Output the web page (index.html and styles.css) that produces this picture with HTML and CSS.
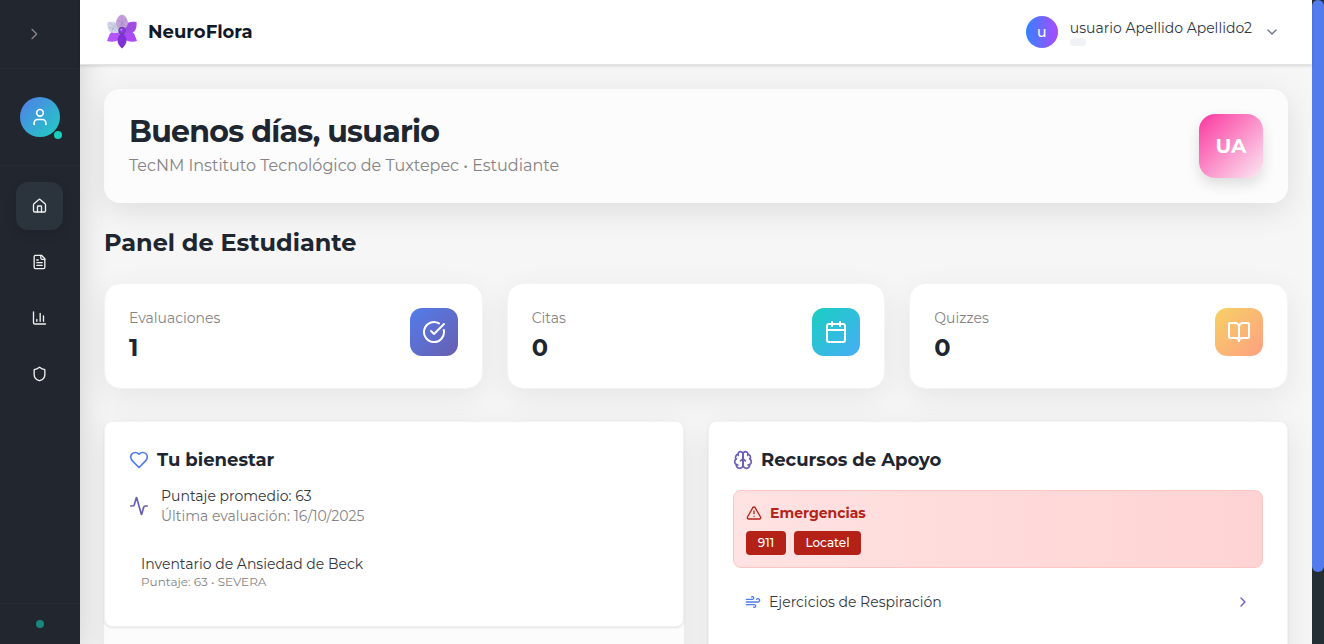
FILE: index.html
```html
<!DOCTYPE html>
<html lang="es">
<head>
<meta charset="utf-8">
<title>NeuroFlora</title>
<link rel="stylesheet" href="styles.css">
</head>
<body>
<div class="app">
  <aside class="sidebar">
    <div class="side-top"><svg class="icon i16" viewBox="0 0 24 24"><path d="m9 19 7-7-7-7"/></svg></div>
    <div class="side-user">
      <div class="side-profile">
        <div class="side-avatar"><svg class="icon i20" viewBox="0 0 24 24"><circle cx="12" cy="7" r="4"/><path d="M19 21v-2a4 4 0 0 0-4-4H9a4 4 0 0 0-4 4v2"/></svg></div>
        <span class="online"></span>
      </div>
    </div>
    <nav class="nav">
      <a class="nav-item active"><svg class="icon i16" viewBox="0 0 24 24"><path d="M15 21v-8a1 1 0 0 0-1-1h-4a1 1 0 0 0-1 1v8"/><path d="M3 10a2 2 0 0 1 .709-1.528l7-5.999a2 2 0 0 1 2.582 0l7 5.999A2 2 0 0 1 21 10v9a2 2 0 0 1-2 2H5a2 2 0 0 1-2-2z"/></svg></a>
      <a class="nav-item"><svg class="icon i16" viewBox="0 0 24 24"><path d="M15 2H6a2 2 0 0 0-2 2v16a2 2 0 0 0 2 2h12a2 2 0 0 0 2-2V7Z"/><path d="M14 2v4a2 2 0 0 0 2 2h4M10 9H8M16 13H8M16 17H8"/></svg></a>
      <a class="nav-item"><svg class="icon i16" viewBox="0 0 24 24"><path d="M3 3v16a2 2 0 0 0 2 2h16M18 17V9M13 17V5M8 17v-3"/></svg></a>
      <a class="nav-item"><svg class="icon i16" viewBox="0 0 24 24"><path d="M20 13c0 5-3.500 7.500-7.660 8.950a1 1 0 0 1-.67-.01C7.500 20.500 4 18 4 13V6a1 1 0 0 1 1-1c2 0 4.500-1.200 6.240-2.720a1.170 1.170 0 0 1 1.520 0C14.510 3.810 17 5 19 5a1 1 0 0 1 1 1z"/></svg></a>
    </nav>
    <div class="side-foot"><span class="status"></span></div>
  </aside>

  <div class="page">
    <header class="header">
      <div class="brand">
        <svg class="logo" viewBox="0 0 32 36">
          <path d="M16 16C9 15.500 5 17.500 3.500 20.500L1 27c5 1.500 10 .8 15-3z" fill="#b455fb"/>
          <path d="M16 16c7-.5 11 1.500 12.500 4.500L31 27c-5 1.500-10 .8-15-3z" fill="#ab4bf6"/>
          <path d="M16 19c-6 4-6 10.500 0 15.500 6-5 6-11.500 0-15.500z" fill="#812fd8"/>
          <path d="M16 17C15.500 10 10 6.500 1.500 8c-.5 5 .5 9 4 10.500 3.500 1.200 7 .5 10.500-1.500z" fill="#d0d6e8"/>
          <path d="M16 17c.5-7 6-10.500 14.500-9 .5 5-.5 9-4 10.500-3.500 1.200-7 .5-10.500-1.500z" fill="#a44de6"/>
          <path d="M16 16c-4.500-2-7-5.500-5.700-9 1-3.500 3.200-6.200 5.700-6.200s4.700 2.700 5.700 6.200C23 10.500 20.500 14 16 16z" fill="#c4a0d9"/>
          <path d="M4 9l8 6M8 9l4 5M3 13l7 3M6 17l2-5M12 6l7 6M20 5l-6 7M16 2v10M28 9l-8 6M25 9l-4 7M29 13l-7 3M16 22v10M13 25l3 4 3-4" fill="none" stroke="#65509a" stroke-width=".5" opacity=".4"/>
          <circle cx="16" cy="16.500" r="3.300" fill="#8e39f0" stroke="#5c4691" stroke-width="1"/>
          <circle cx="15.300" cy="15.700" r="1" fill="#c48bff"/>
        </svg>
        <span class="brand-name">NeuroFlora</span>
      </div>
      <div class="account">
        <div class="account-avatar">u</div>
        <div class="account-text">
          <span class="account-name">usuario Apellido Apellido2</span>
          <span class="role-chip"></span>
        </div>
        <svg class="icon i16 chevron" viewBox="0 0 24 24"><path d="m6 9 6 6 6-6"/></svg>
      </div>
    </header>

    <main class="main">
      <section class="hero">
        <div>
          <h1 class="hero-title">Buenos días, usuario</h1>
          <p class="hero-sub">TecNM Instituto Tecnológico de Tuxtepec • Estudiante</p>
        </div>
        <div class="initials">UA</div>
      </section>

      <h2 class="section-title">Panel de Estudiante</h2>

      <section class="stats">
        <article class="stat">
          <div><p class="stat-label">Evaluaciones</p><p class="stat-value">1</p></div>
          <div class="stat-icon violet"><svg class="icon i24" viewBox="0 0 24 24"><path d="M21.800 10A10 10 0 1 1 17 3.335"/><path d="m9 11 3 3L22 4"/></svg></div>
        </article>
        <article class="stat">
          <div><p class="stat-label">Citas</p><p class="stat-value">0</p></div>
          <div class="stat-icon teal"><svg class="icon i24" viewBox="0 0 24 24"><path d="M8 2v4M16 2v4M3 10h18"/><rect x="3" y="4" width="18" height="18" rx="2"/></svg></div>
        </article>
        <article class="stat">
          <div><p class="stat-label">Quizzes</p><p class="stat-value">0</p></div>
          <div class="stat-icon amber"><svg class="icon i24" viewBox="0 0 24 24"><path d="M12 7v14"/><path d="M3 18a1 1 0 0 1-1-1V4a1 1 0 0 1 1-1h5a4 4 0 0 1 4 4 4 4 0 0 1 4-4h5a1 1 0 0 1 1 1v13a1 1 0 0 1-1 1h-6a3 3 0 0 0-3 3 3 3 0 0 0-3-3z"/></svg></div>
        </article>
      </section>

      <section class="panels">
        <div class="panel-column">
          <article class="panel wellbeing">
            <h3 class="panel-title"><svg class="icon i20 blue" viewBox="0 0 24 24"><path d="M19 14c1.490-1.460 3-3.210 3-5.500A5.500 5.500 0 0 0 16.500 3c-1.760 0-3 .5-4.500 2-1.500-1.500-2.740-2-4.500-2A5.500 5.500 0 0 0 2 8.500c0 2.300 1.500 4.050 3 5.500l7 7Z"/></svg><span>Tu bienestar</span></h3>
            <div class="score">
              <svg class="icon i20 purple" viewBox="0 0 24 24"><path d="M22 12h-2.480a2 2 0 0 0-1.930 1.460l-2.350 8.360a.25.25 0 0 1-.48 0L9.240 2.180a.25.25 0 0 0-.48 0l-2.350 8.360A2 2 0 0 1 4.490 12H2"/></svg>
              <div><p class="row-text">Puntaje promedio: 63</p><p class="row-text muted">Última evaluación: 16/10/2025</p></div>
            </div>
            <div class="test"><p class="row-text">Inventario de Ansiedad de Beck</p><p class="small muted">Puntaje: 63 • SEVERA</p></div>
          </article>
        </div>
        <article class="panel resources">
          <h3 class="panel-title"><svg class="icon i20 purple" viewBox="0 0 24 24"><path d="M12 5a3 3 0 1 0-5.997.125 4 4 0 0 0-2.526 5.770 4 4 0 0 0 .556 6.588A4 4 0 1 0 12 18Z"/><path d="M12 5a3 3 0 1 1 5.997.125 4 4 0 0 1 2.526 5.770 4 4 0 0 1-.556 6.588A4 4 0 1 1 12 18Z"/><path d="M15 13a4.500 4.500 0 0 1-3-4 4.500 4.500 0 0 1-3 4M17.599 6.500a3 3 0 0 0 .399-1.375M6.003 5.125A3 3 0 0 0 6.401 6.500M3.477 10.896a4 4 0 0 1 .585-.396M19.938 10.500a4 4 0 0 1 .585.396M6 18a4 4 0 0 1-1.967-.516M19.967 17.484A4 4 0 0 1 18 18"/></svg><span>Recursos de Apoyo</span></h3>
          <div class="emergency">
            <p class="emergency-title"><svg class="icon i16" viewBox="0 0 24 24"><path d="m21.730 18-8-14a2 2 0 0 0-3.480 0l-8 14A2 2 0 0 0 4 21h16a2 2 0 0 0 1.730-3M12 9v4M12 17h.01"/></svg><span>Emergencias</span></p>
            <div class="calls"><a class="call n911">911</a><a class="call locatel">Locatel</a></div>
          </div>
          <a class="resource"><svg class="icon i16 blue" viewBox="0 0 24 24"><path d="M12.800 19.600A2 2 0 1 0 14 16H2M17.500 8a2.500 2.500 0 1 1 2 4H2M9.800 4.400A2 2 0 1 1 11 8H2"/></svg><span class="row-text">Ejercicios de Respiración</span><svg class="icon i16 purple next" viewBox="0 0 24 24"><path d="m9 18 6-6-6-6"/></svg></a>
        </article>
      </section>
    </main>
  </div>
  <div class="scrollbar"><div class="thumb"></div></div>
</div>
</body>
</html>
```
FILE: styles.css
```css
* { box-sizing: border-box; }
body { margin: 0; font-family: Montserrat, Inter, "Open Sans", sans-serif; color: #20262f; overflow: hidden; }
h1, h2, h3, p { margin: 0; }
.app { display: flex; width: 100%; height: 644px; overflow: hidden; background: #f6f6f6; }
.icon { display: block; flex: none; fill: none; stroke: currentColor; stroke-width: 2; stroke-linecap: round; stroke-linejoin: round; }
.i16 { width: 16px; height: 16px; }
.i20 { width: 20px; height: 20px; }
.i24 { width: 24px; height: 24px; }
.blue { color: #4f7cec; }
.purple { color: #665fb5; }
.muted { color: #858383; }

.sidebar { display: flex; flex-direction: column; flex: none; width: 80px; background: #21262f; box-shadow: 0 8px 32px rgba(0, 0, 0, .16); position: relative; z-index: 1; color: #f1f1f1; }
.side-top { display: flex; align-items: center; justify-content: center; height: 69px; padding-right: 12px; border-bottom: 1px solid #252a33; color: #8c8788; }
.side-user { height: 97px; padding: 16px; border-bottom: 1px solid #252a33; }
.side-profile { display: flex; align-items: center; justify-content: center; position: relative; width: 48px; height: 64px; border-radius: 12px; background: #22272f; }
.side-avatar { display: flex; align-items: center; justify-content: center; width: 40px; height: 40px; border-radius: 50%; background: linear-gradient(135deg, #527ceb, #1fcfc1); color: #fff; }
.online { position: absolute; right: 2px; bottom: 10px; width: 8px; height: 8px; border-radius: 50%; background: #17d1bd; }
.nav { display: flex; flex-direction: column; gap: 8px; padding: 16px; flex: 1; }
.nav-item { display: flex; align-items: center; justify-content: center; width: 47px; height: 48px; border-radius: 12px; }
.nav-item .icon { transform: translateX(-.5px); }
.nav-item.active { background: #2b343d; box-shadow: 0 4px 12px rgba(0, 0, 0, .1); }
.side-foot { display: flex; align-items: center; justify-content: center; height: 41px; border-top: 1px solid #252a33; }
.status { width: 8px; height: 8px; border-radius: 50%; background: #1b857f; }

.page { flex: 1; min-width: 0; }
.header { display: flex; align-items: center; justify-content: space-between; height: 65px; padding: 0 32px 1px 26px; background: #fff; border-bottom: 1px solid #e2e3e6; box-shadow: 0 1px 3px rgba(0, 0, 0, .14); position: relative; z-index: 2; }
.brand { display: flex; align-items: center; gap: 10px; }
.logo { width: 32px; height: 36px; }
.brand-name { font-size: 18px; line-height: 28px; font-weight: 700; color: #111827; }
.account { display: flex; align-items: center; gap: 12px; }
.account-avatar { display: flex; align-items: center; justify-content: center; width: 32px; height: 32px; border-radius: 50%; background: linear-gradient(90deg, #3581ff, #a94bff); color: #fff; font-size: 14px; font-weight: 500; }
.account-text { display: flex; flex-direction: column; align-items: flex-start; height: 28px; }
.account-name { font-size: 14px; line-height: 20px; color: #303846; }
.role-chip { width: 16px; height: 8px; border-radius: 4px; background: #f1f2f5; }
.chevron { color: #697280; }

.main { padding: 24px; }
.hero { display: flex; justify-content: space-between; align-items: center; height: 114px; padding: 0 25px; border-radius: 16px; background: #fcfcfc; box-shadow: 0 8px 32px rgba(0, 0, 0, .1); }
.hero-title { font-size: 30px; line-height: 36px; font-weight: 700; letter-spacing: -.75px; }
.hero-sub { margin-top: 4px; font-size: 16px; line-height: 24px; color: #858383; }
.initials { display: flex; align-items: center; justify-content: center; width: 64px; height: 64px; border-radius: 16px; background: linear-gradient(135deg, #fb369f, #fbeaf3); box-shadow: 0 6px 14px rgba(0, 0, 0, .13); color: #fff; font-size: 20px; font-weight: 700; }
.section-title { margin-top: 24px; font-size: 24px; line-height: 32px; font-weight: 700; }
.stats { display: grid; grid-template-columns: repeat(3, 1fr); gap: 24px; margin-top: 24px; }
.stat { display: flex; justify-content: space-between; height: 106px; padding: 24px; border: 1px solid #f4f4f4; border-radius: 16px; background: #fff; background-clip: padding-box; box-shadow: 0 8px 32px rgba(0, 0, 0, .07); }
.stat-label { font-size: 14px; line-height: 20px; color: #858383; }
.stat-value { margin-top: 4px; font-size: 24px; line-height: 32px; font-weight: 700; }
.stat-icon { display: flex; align-items: center; justify-content: center; width: 48px; height: 48px; border-radius: 12px; color: #fff; }
.violet { background: linear-gradient(135deg, #527ceb, #695faf); }
.teal { background: linear-gradient(135deg, #19cfc1, #47adf5); }
.amber { background: linear-gradient(135deg, #f6d165, #ff9f82); }

.panels { display: grid; grid-template-columns: 1fr 1fr; gap: 24px; margin-top: 32px; }
.panel-column { height: 260px; border-radius: 8px; background: #fcfcfc; box-shadow: 0 8px 32px rgba(0, 0, 0, .08); }
.panel { padding: 24px; border: 1px solid #f2f2f2; border-radius: 8px; background: #fff; box-shadow: 0 1px 2px rgba(0, 0, 0, .1); }
.wellbeing { height: 206px; }
.resources { height: 260px; box-shadow: 0 1px 2px rgba(0, 0, 0, .1), 0 8px 32px rgba(0, 0, 0, .08); }
.panel-title { display: flex; align-items: center; gap: 8px; height: 28px; font-size: 18px; font-weight: 700; }
.row-text { font-size: 14px; line-height: 20px; color: #34373e; }
.row-text.muted { color: #858383; }
.small { font-size: 12px; line-height: 16px; }
.score { display: flex; align-items: center; gap: 12px; margin-top: 12px; }
.test { margin-top: 28px; padding-left: 12px; }
.emergency { height: 78px; margin-top: 16px; padding: 12px; border: 1px solid #ffc5c5; border-radius: 8px; background: linear-gradient(90deg, #ffe2e2, #ffd3d3); }
.emergency-title { display: flex; align-items: center; gap: 8px; font-size: 14px; line-height: 20px; font-weight: 700; color: #b32318; }
.calls { display: flex; gap: 8px; margin-top: 8px; }
.call { display: flex; align-items: center; justify-content: center; height: 24px; padding-bottom: 1px; border-radius: 4px; background: #b32117; color: #fff; font-size: 12px; font-weight: 500; }
.n911 { width: 40px; }
.locatel { width: 67px; }
.resource { display: flex; align-items: center; gap: 8px; margin-top: 24px; padding: 0 12px; }
.next { margin-left: auto; }

.scrollbar { flex: none; width: 12px; background: #232e35; }
.thumb { height: 572px; border-radius: 6px; background: #527ceb; }
```
